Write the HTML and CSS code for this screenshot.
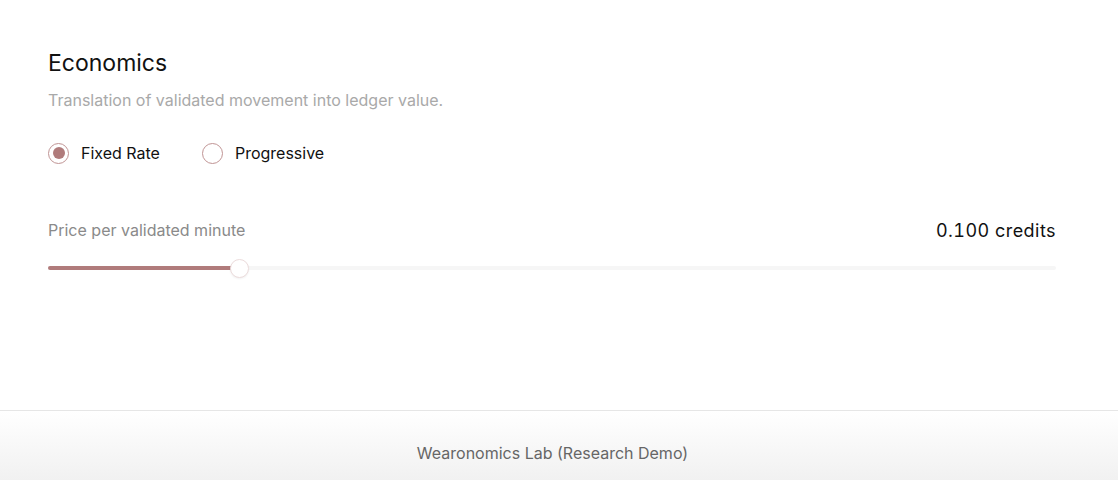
FILE: index.html
```html
<!DOCTYPE html>
<html lang="en">
<head>
<meta charset="utf-8">
<title>Economics</title>
<link rel="stylesheet" href="styles.css">
</head>
<body>
<main class="main">
  <section class="section">
    <h2 class="title">Economics</h2>
    <p class="subtitle">Translation of validated movement into ledger value.</p>
    <div class="radios">
      <label class="radio">
        <span class="radio-circle checked"><span class="radio-dot"></span></span>
        <span class="radio-label">Fixed Rate</span>
      </label>
      <label class="radio">
        <span class="radio-circle"></span>
        <span class="radio-label">Progressive</span>
      </label>
    </div>
    <div class="price-row">
      <span class="price-label">Price per validated minute</span>
      <span class="price-value">0.100 credits</span>
    </div>
    <div class="slider">
      <div class="track">
        <div class="fill" style="width: 18.9%"></div>
        <div class="thumb" style="left: 18.9%"></div>
      </div>
    </div>
  </section>
</main>
<footer class="footer">Wearonomics Lab (Research Demo)</footer>
</body>
</html>
```
FILE: styles.css
```css
* { box-sizing: border-box; }
html, body { margin: 0; padding: 0; }
body {
  font-family: Inter, "Noto Sans", sans-serif;
  background: #fff;
  color: #111;
  overflow: hidden;
}
.main {
  height: 410px;
  padding: 49px 62px 0 48px;
}
.section { display: flex; flex-direction: column; }
.title {
  margin: 0;
  font-size: 23px;
  line-height: 28px;
  font-weight: 400;
  color: #111;
}
.subtitle {
  margin: 12px 0 0;
  font-size: 16px;
  line-height: 22px;
  color: #a9a9a9;
}
.radios {
  margin-top: 31px;
  display: flex;
  gap: 42px;
  align-items: center;
}
.radio { display: flex; align-items: center; gap: 12px; }
.radio-circle {
  width: 21px;
  height: 21px;
  border-radius: 50%;
  border: 1.5px solid #c09494;
  display: flex;
  align-items: center;
  justify-content: center;
}
.radio-dot {
  width: 12px;
  height: 12px;
  border-radius: 50%;
  background: #b07b7b;
}
.radio-label {
  font-size: 16px;
  line-height: 22px;
  color: #111;
}
.price-row {
  margin-top: 54px;
  display: flex;
  justify-content: space-between;
  align-items: center;
  height: 24px;
}
.price-label { font-size: 16px; color: #8a8a8a; }
.price-value {
  font-size: 18px;
  color: #111;
  font-weight: 400;
  font-variant-numeric: tabular-nums;
  letter-spacing: 0.45px;
}
.slider { margin-top: 24px; }
.track {
  position: relative;
  height: 4px;
  background: #f6f6f6;
  border-radius: 2px;
}
.fill {
  height: 100%;
  background: #b07b7b;
  border-radius: 2px;
}
.thumb {
  position: absolute;
  top: 50%;
  width: 19px;
  height: 19px;
  margin-left: -9px;
  margin-top: -9.5px;
  border-radius: 50%;
  background: #fff;
  border: 1px solid #ecdcdc;
  box-shadow: 0 1px 2px rgba(0,0,0,0.06);
}
.footer {
  border-top: 1px solid #e6e6e6;
  background: linear-gradient(#ffffff, #f1f1f1);
  height: 70px;
  padding: 31px 13px 0 0;
  text-align: center;
  font-size: 16px;
  line-height: 22px;
  color: #666;
}
```
